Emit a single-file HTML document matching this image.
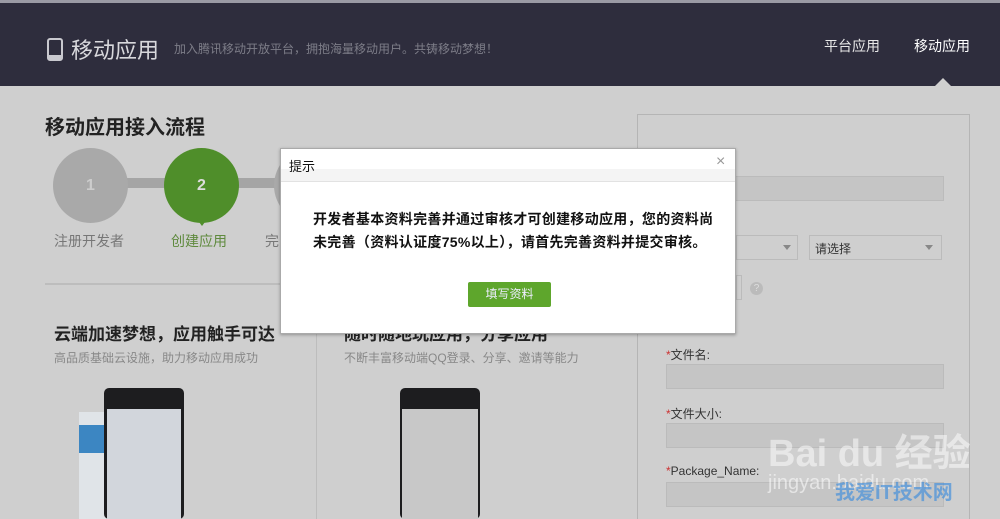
<!DOCTYPE html>
<html><head><meta charset="utf-8"><style>
*{margin:0;padding:0;box-sizing:border-box}
html{width:1000px;height:519px;overflow:hidden}
body{width:1000px;height:519px;overflow:hidden;background:#cfcfcf;font-family:"Liberation Sans","Noto Sans CJK SC",sans-serif;position:relative}
.a{position:absolute}
.hd{left:0;top:0;width:1000px;height:86px;background:#2e2d3d;border-top:3px solid #9a9aa4}
.t{white-space:nowrap}
.inp{background:#c5c5c5;border:1px solid #bbb}
</style></head><body>
<div class="a hd"></div>
<div class="a" style="left:47px;top:38px;width:16px;height:23px;border:2px solid #c9c9cf;border-bottom-width:6px;border-radius:3px"></div>
<div class="a t" style="left:71px;top:33px;font-size:22px;color:#d8d8dc">移动应用</div>
<div class="a t" style="left:174px;top:40px;font-size:12px;color:#7d7d88">加入腾讯移动开放平台，拥抱海量移动用户。共铸移动梦想！</div>
<div class="a t" style="left:824px;top:36px;font-size:14px;color:#e8e8e8">平台应用</div>
<div class="a t" style="left:914px;top:36px;font-size:14px;color:#fff">移动应用</div>
<div class="a" style="left:935px;top:78px;width:0;height:0;border:8px solid transparent;border-bottom-color:#cfcfcf;border-top:0"></div>

<div class="a t" style="left:45px;top:111px;font-size:20px;font-weight:bold;color:#222">移动应用接入流程</div>
<div class="a" style="left:120px;top:178px;width:170px;height:10px;background:#a5a5a5"></div>
<div class="a" style="left:53px;top:148px;width:75px;height:75px;border-radius:50%;background:#a9a9a9;color:#ccc;font-size:16px;font-weight:bold;text-align:center;line-height:75px">1</div>
<div class="a" style="left:164px;top:148px;width:75px;height:75px;border-radius:50%;background:#4f8e2a;color:#ddd;font-size:16px;font-weight:bold;text-align:center;line-height:75px">2</div>
<div class="a" style="left:196px;top:218px;width:0;height:0;border-left:6px solid transparent;border-right:6px solid transparent;border-top:8px solid #4f8e2a"></div>
<div class="a" style="left:274px;top:148px;width:75px;height:75px;border-radius:50%;background:#a9a9a9"></div>
<div class="a t" style="left:54px;top:231px;font-size:14px;color:#777">注册开发者</div>
<div class="a t" style="left:171px;top:231px;font-size:14px;color:#5f8a3e">创建应用</div>
<div class="a t" style="left:265px;top:231px;font-size:14px;color:#777">完</div>
<div class="a" style="left:45px;top:283px;width:590px;height:2px;background:#bdbdbd"></div>
<div class="a" style="left:316px;top:285px;width:1px;height:234px;background:#bdbdbd"></div>
<div class="a t" style="left:54px;top:320px;font-size:17px;font-weight:bold;color:#222">云端加速梦想，应用触手可达</div>
<div class="a t" style="left:54px;top:349px;font-size:12px;color:#888">高品质基础云设施，助力移动应用成功</div>
<div class="a t" style="left:344px;top:320px;font-size:17px;font-weight:bold;color:#222">随时随地玩应用，分享应用</div>
<div class="a t" style="left:344px;top:349px;font-size:12px;color:#888">不断丰富移动端QQ登录、分享、邀请等能力</div>
<div class="a" style="left:79px;top:412px;width:50px;height:107px;background:#e0e4e8"></div>
<div class="a" style="left:79px;top:425px;width:50px;height:28px;background:#3c86c2"></div>
<div class="a" style="left:104px;top:388px;width:80px;height:131px;background:#1d1d1f;border-radius:5px"></div>
<div class="a" style="left:107px;top:409px;width:74px;height:110px;background:#d2d6dc"></div>
<div class="a" style="left:400px;top:388px;width:80px;height:131px;background:#1d1d1f;border-radius:5px"></div>
<div class="a" style="left:402px;top:409px;width:76px;height:110px;background:#c8c8c8"></div>

<div class="a" style="left:637px;top:114px;width:333px;height:410px;border:1px solid #b5b5b5"></div>
<div class="a inp" style="left:666px;top:176px;width:278px;height:25px"></div>
<div class="a inp" style="left:736px;top:235px;width:62px;height:25px;background:#cfcfcf"></div>
<div class="a inp" style="left:809px;top:235px;width:133px;height:25px;background:#cfcfcf"></div>
<div class="a t" style="left:815px;top:240px;font-size:12px;color:#333">请选择</div>
<div class="a" style="left:783px;top:245px;border:4px solid transparent;border-top:5px solid #888"></div>
<div class="a" style="left:925px;top:245px;border:4px solid transparent;border-top:5px solid #888"></div>
<div class="a inp" style="left:736px;top:275px;width:6px;height:25px;background:#cfcfcf"></div>
<div class="a" style="left:750px;top:282px;width:13px;height:13px;border-radius:50%;background:#bbb;color:#ddd;font-size:10px;text-align:center;line-height:13px">?</div>
<div class="a t" style="left:666px;top:346px;font-size:12px;color:#333"><span style="color:#c33">*</span>文件名:</div>
<div class="a inp" style="left:666px;top:364px;width:278px;height:25px"></div>
<div class="a t" style="left:666px;top:405px;font-size:12px;color:#333"><span style="color:#c33">*</span>文件大小:</div>
<div class="a inp" style="left:666px;top:423px;width:278px;height:25px"></div>
<div class="a t" style="left:666px;top:464px;font-size:12px;color:#333"><span style="color:#c33">*</span>Package_Name:</div>
<div class="a inp" style="left:666px;top:482px;width:278px;height:25px"></div>
<div class="a t" style="left:768px;top:422px;font-size:38px;font-weight:bold;color:rgba(255,255,255,.5)">Bai du 经验</div>
<div class="a t" style="left:768px;top:472px;font-size:20px;color:rgba(255,255,255,.55)">jingyan.baidu.com</div>
<div class="a t" style="left:835px;top:476px;font-size:20px;font-weight:bold;color:rgba(60,140,220,.65)">我爱IT技术网</div>

<div class="a" style="left:280px;top:148px;width:456px;height:186px;background:#fff;border:1px solid #aaa;box-shadow:0 1px 3px rgba(0,0,0,.3)"></div>
<div class="a" style="left:281px;top:149px;width:454px;height:33px;background:#fff;border-bottom:1px solid #e2e2e2"><div style="margin-top:20px;height:12px;background:#f4f4f4"></div></div>
<div class="a t" style="left:289px;top:156px;font-size:13px;color:#111">提示</div>
<div class="a t" style="left:716px;top:153px;font-size:16px;color:#999">×</div>
<div class="a t" style="left:313px;top:208px;font-size:14px;letter-spacing:0.3px;font-weight:bold;color:#111;line-height:23px">开发者基本资料完善并通过审核才可创建移动应用，您的资料尚<br>未完善（资料认证度75%以上），请首先完善资料并提交审核。</div>
<div class="a" style="left:468px;top:282px;width:83px;height:25px;background:#5ea62c;border-radius:2px;color:#eef;font-size:12px;text-align:center;line-height:25px">填写资料</div>
</body></html>
